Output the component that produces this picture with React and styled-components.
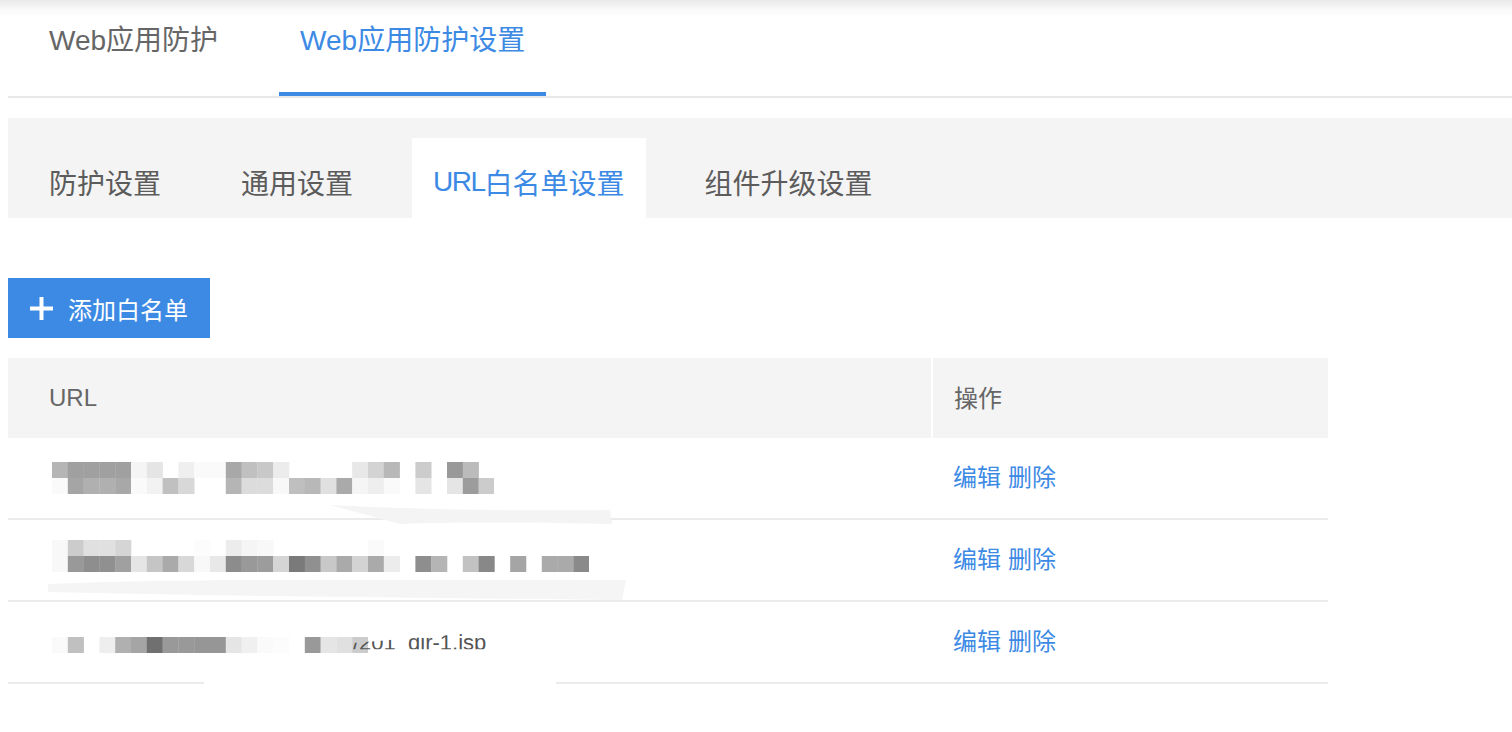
import React from 'react';
import styled, { createGlobalStyle } from 'styled-components';

const GlobalStyle = createGlobalStyle`
  html, body {
    margin: 0;
    padding: 0;
  }
  body {
    background: linear-gradient(to bottom, #e9e9e9 0, #fafafa 10px, #fff 18px) no-repeat;
    background-color: #fff;
    font-family: "Liberation Sans", "Noto Sans CJK SC", sans-serif;
    color: #666;
  }
`;

const BLUE = '#3d8ae5';

// redacted mosaics: one string of hex shades per line, '.' = empty cell
const mosaics = [
  {
    lines: [
      ['b5', 'a0', 'a0', 'a0', 'a0', 'f5', 'e5', '.', 'ef', 'fa', 'fa', 'a8', 'c0', 'c8', 'ec', '.', '.', '.', '.', 'e8', 'd3', 'b8', '.', 'cc', '.', '99', 'bb'],
      ['fa', 'a5', 'b0', 'b0', 'a8', 'fa', 'f2', 'c0', 'd8', '.', '.', 'b5', 'dc', 'dc', 'f8', 'bf', 'b8', 'e0', 'aa', 'f5', 'ee', 'fa', '.', 'e5', '.', 'e5', '9c', 'cc'],
    ],
    lift: 0,
  },
  {
    lines: [
      ['f8', 'cc', 'e0', 'e0', 'd5', '.', '.', '.', '.', 'fc', '.', 'ec', 'f5', 'f8', '.', '.', '.', '.', '.', '.', 'fa'],
      ['f8', '99', '8e', '90', 'a0', 'e5', 'c5', 'aa', 'd8', 'f8', 'e8', '8c', '99', '9c', 'd5', '7a', '90', 'c8', 'aa', 'd3', 'aa', 'ec', '.', '8e', 'b5', '.', 'c2', '88', '.', 'a5', '.', 'aa', 'aa', '8a'],
    ],
    lift: 9,
  },
  {
    lines: [
      ['fa', 'c0', '.', 'ee', 'b0', 'a5', '70', '99', '99', '96', '96', 'e5', 'f0', 'fa', 'fc', '.', '99', 'e5', 'e0', 'cc'],
    ],
    lift: 0,
    tail: '/201_dir-1.jsp',
  },
];

const CELL_W = 15.8;
const CELL_H = 16;

const Page = styled.div`
  padding-left: 8px;
`;

const TopTabs = styled.div`
  display: flex;
  gap: 40px;
  padding-left: 20px;
  border-bottom: 2px solid #e8e8e8;
`;

const TopTab = styled.div`
  height: 96px;
  box-sizing: border-box;
  padding: 0 21px;
  line-height: 82px;
  font-size: 28px;
  color: ${(p) => (p.$active ? BLUE : '#666')};
  border-bottom: 4px solid ${(p) => (p.$active ? BLUE : 'transparent')};
  white-space: nowrap;
`;

const SubBar = styled.div`
  margin-top: 20px;
  padding: 20px 0 0 20px;
  display: flex;
  gap: 38px;
  background: #f4f4f4;
`;

const SubTab = styled.div`
  height: 80px;
  box-sizing: border-box;
  padding: 8px 21px 0;
  display: flex;
  align-items: center;
  font-size: 28px;
  white-space: nowrap;
  color: ${(p) => (p.$active ? BLUE : '#5c5c5c')};
  background: ${(p) => (p.$active ? '#fff' : 'transparent')};
`;

const Latin = styled.span`
  letter-spacing: -1.5px;
`;

const AddButton = styled.button`
  margin-top: 60px;
  height: 60px;
  width: 202px;
  padding: 0 0 0 22px;
  display: flex;
  align-items: center;
  gap: 15px;
  border: none;
  border-radius: 0;
  background: ${BLUE};
  color: #fff;
  font-family: inherit;
  font-size: 24px;
  cursor: pointer;
`;

const Table = styled.div`
  position: relative;
  margin-top: 20px;
  width: 1320px;
`;

const Row = styled.div`
  display: grid;
  grid-template-columns: 923px 395px;
  column-gap: 2px;
  height: ${(p) => (p.$head ? '80px' : '82px')};
  box-sizing: border-box;
  border-bottom: ${(p) => (p.$head ? 'none' : '2px solid #ebebeb')};
`;

const HeadCell = styled.div`
  background: #f4f4f4;
  display: flex;
  align-items: center;
  padding-left: ${(p) => (p.$first ? '41px' : '21px')};
  padding-bottom: ${(p) => (p.$first ? '0' : '3px')};
  font-size: 24px;
  color: #666;
`;

const Cell = styled.div`
  display: flex;
  align-items: center;
  padding-left: ${(p) => (p.$first ? '44px' : '20px')};
  padding-bottom: ${(p) => (p.$first ? '0' : '5px')};
  font-size: 24px;
`;

const Action = styled.a`
  color: ${BLUE};
  text-decoration: none;
  margin-right: 7px;
  cursor: pointer;
`;

const MosaicWrap = styled.div`
  display: flex;
  align-items: flex-end;
  margin-bottom: ${(p) => p.$lift}px;
`;

const Tail = styled.span`
  margin-left: -15px;
  font-size: 22px;
  color: #555;
  line-height: 1;
  clip-path: polygon(0 50%, 100% 0, 100% 78%, 0 78%);
  transform: translateY(1px);
`;

const Smears = styled.svg`
  position: absolute;
  left: 0;
  top: 80px;
  pointer-events: none;
`;

function Plus() {
  return (
    <svg width="23" height="23" viewBox="0 0 23 23">
      <rect x="0" y="9.5" width="23" height="4" fill="#fff" />
      <rect x="9.5" y="0" width="4" height="23" fill="#fff" />
    </svg>
  );
}

function Mosaic({ lines }) {
  const cols = Math.max(...lines.map((l) => l.length));
  return (
    <svg width={cols * CELL_W} height={lines.length * CELL_H}>
      {lines.map((line, r) =>
        line.map((c, i) =>
          c === '.' ? null : (
            <rect
              key={r + '-' + i}
              x={i * CELL_W}
              y={r * CELL_H}
              width={CELL_W + 0.3}
              height={CELL_H}
              fill={'#' + c + c + c}
            />
          )
        )
      )}
    </svg>
  );
}

export default function App() {
  return (
    <Page>
      <GlobalStyle />
      <TopTabs>
        <TopTab>Web应用防护</TopTab>
        <TopTab $active>Web应用防护设置</TopTab>
      </TopTabs>

      <SubBar>
        <SubTab>防护设置</SubTab>
        <SubTab>通用设置</SubTab>
        <SubTab $active>
          <Latin>URL</Latin>白名单设置
        </SubTab>
        <SubTab>组件升级设置</SubTab>
      </SubBar>

      <AddButton>
        <Plus />
        添加白名单
      </AddButton>

      <Table>
        <Row $head>
          <HeadCell $first>URL</HeadCell>
          <HeadCell>操作</HeadCell>
        </Row>
        {mosaics.map((m, idx) => (
          <Row key={idx}>
            <Cell $first>
              <MosaicWrap $lift={m.lift}>
                <Mosaic lines={m.lines} />
                {m.tail && <Tail>{m.tail}</Tail>}
              </MosaicWrap>
            </Cell>
            <Cell>
              <Action>编辑</Action>
              <Action>删除</Action>
            </Cell>
          </Row>
        ))}
        <Smears width="640" height="260" viewBox="0 0 640 260">
          <path d="M322 67 C420 72 520 73 602 72 L604 86 C520 84 440 84 392 86 Z" fill="#f4f4f4" />
          <path d="M40 146 C180 140 420 142 618 142 L614 162 C420 160 200 158 40 154 Z" fill="#f5f5f5" />
          <path d="M196 243 L548 243 L548 248 L196 248 Z" fill="#fff" />
        </Smears>
      </Table>
    </Page>
  );
}
